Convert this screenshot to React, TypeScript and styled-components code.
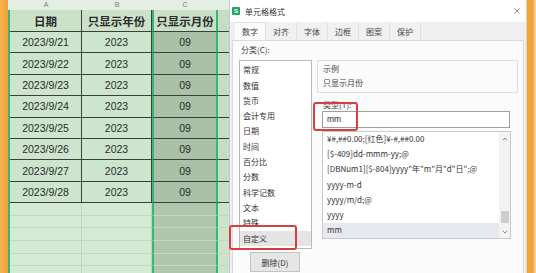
import React from "react";
import styled, { createGlobalStyle } from "styled-components";
import { X, ChevronUp, ChevronDown } from "lucide-react";

const CJK = `"Noto Sans CJK SC", "Noto Sans", sans-serif`;

const GlobalStyle = createGlobalStyle`
  html, body {
    margin: 0;
    padding: 0;
  }
  body {
    width: 536px;
    height: 273px;
    overflow: hidden;
    background: #f3a53c;
    font-family: ${CJK};
  }
`;

const Page = styled.div`
  display: flex;
  width: 536px;
  height: 273px;
  overflow: hidden;
  background: #f3a53c;
`;

const LeftEdge = styled.div`
  width: 8px;
  flex: none;
  background: linear-gradient(90deg, #f7b552, #f0a236);
`;

const RightEdge = styled.div`
  flex: 1;
  background: linear-gradient(90deg, #f2a33a 0, #f2a33a 6px, #f8cf92 8px, #fbe3bd 100%);
`;

/* ---------- spreadsheet ---------- */

const Sheet = styled.div`
  width: 221px;
  flex: none;
  display: flex;
  flex-direction: column;
  background: #d3e9d2;
`;

const COLS = "72px 70px 66px 11px";

const ColHead = styled.div`
  display: grid;
  grid-template-columns: 2px ${COLS};
  height: 10px;
  background: #e3efe1;
  font-family: "Liberation Sans", sans-serif;
  font-size: 7px;
  line-height: 10px;
  color: #7a7a7a;
  text-align: center;
`;

const Table = styled.div`
  display: grid;
  grid-template-columns: ${COLS};
  border-left: 2px solid #3db374;
`;

const Cell = styled.div<{ $sel?: boolean; $tail?: boolean; $head?: boolean; $h: number }>`
  box-sizing: border-box;
  height: ${(p) => p.$h}px;
  display: flex;
  align-items: center;
  justify-content: center;
  border-bottom: 1px solid #3a3f3a;
  border-right: ${(p) => (p.$sel || p.$tail ? "0" : "1px solid #3a3f3a")};
  border-left: ${(p) => (p.$sel ? "2px solid #3db374" : "0")};
  ${(p) => (p.$sel ? "border-right: 2px solid #3db374;" : "")}
  background: ${(p) =>
    p.$tail ? "#c6ddc5" : p.$sel ? (p.$head ? "#c9e0c7" : "#a9c1a7") : p.$head ? "#cbe2c9" : "#cde5cc"};
  font-family: ${(p) => (p.$head ? CJK : `"Liberation Sans", sans-serif`)};
  font-size: ${(p) => (p.$head ? "11.5px" : "10.5px")};
  font-weight: ${(p) => (p.$head ? 700 : 400)};
  color: #2b2b2b;
  white-space: nowrap;
`;

const FillCell = styled.div<{ $sel?: boolean; $tail?: boolean }>`
  box-sizing: border-box;
  height: 12.6px;
  border-bottom: 1px solid #c2d9c1;
  border-right: ${(p) => (p.$sel || p.$tail ? "0" : "1px solid #bfd3c6")};
  ${(p) => (p.$sel ? "border-left: 2px solid #3db374; border-right: 2px solid #3db374;" : "")}
  background: ${(p) => (p.$tail ? "#cde3cc" : p.$sel ? "#aec6ac" : "#d4ead3")};
`;

/* ---------- dialog ---------- */

const Dialog = styled.div`
  width: 298px;
  flex: none;
  box-sizing: border-box;
  display: flex;
  flex-direction: column;
  background: #ffffff;
  border-left: 1px solid #c9c9c9;
  border-right: 1px solid #d6d6d6;
  font-family: ${CJK};
  color: #333;
`;

const TitleBar = styled.div`
  height: 22px;
  flex: none;
  display: flex;
  align-items: center;
  padding: 0 4px 0 2px;
  font-size: 8px;
`;

const Logo = styled.div`
  width: 8px;
  height: 8px;
  border-radius: 1px;
  background: #29a567;
  color: #fff;
  font-family: "Liberation Sans", sans-serif;
  font-weight: 700;
  font-size: 6px;
  line-height: 8px;
  text-align: center;
`;

const Title = styled.div`
  margin-left: 5px;
  color: #333;
`;

const Close = styled.div`
  margin-left: auto;
  display: flex;
  color: #555;
`;

const Body = styled.div`
  flex: 1;
  display: flex;
  flex-direction: column;
  background: #efefef;
  padding: 0 2px 0 2px;
`;

const Tabs = styled.div`
  display: flex;
  height: 18px;
  margin-left: 3px;
`;

const Tab = styled.div<{ $active?: boolean }>`
  width: 31px;
  box-sizing: border-box;
  display: flex;
  align-items: center;
  justify-content: center;
  font-size: 8px;
  color: #444;
  background: ${(p) => (p.$active ? "#fbfbfb" : "#f1f1f1")};
  border-right: 1px solid #e0e0e0;
  border-top: 1px solid ${(p) => (p.$active ? "#e0e0e0" : "transparent")};
`;

const Panel = styled.div`
  position: relative;
  flex: 1;
  background: #fbfbfb;
  border: 1px solid #dadada;
  border-bottom: 0;
  padding: 2px 0 0 6px;
`;

const GroupLabel = styled.div`
  height: 17px;
  padding-left: 2px;
  font-size: 8px;
  line-height: 14px;
  color: #444;
`;

const Columns = styled.div`
  display: flex;
  gap: 5px;
`;

const LeftCol = styled.div`
  width: 73px;
  display: flex;
  flex-direction: column;
`;

const CatList = styled.div`
  height: 189px;
  box-sizing: border-box;
  border: 1px solid #b9b9b9;
  background: #fff;
  padding-top: 1.3px;
`;

const CatItem = styled.div<{ $sel?: boolean }>`
  height: 15.3px;
  line-height: 15.3px;
  padding-left: 3px;
  font-size: 8px;
  color: #333;
  background: ${(p) => (p.$sel ? "#e4e4e4" : "transparent")};
`;

const Button = styled.div`
  margin: 3px 0 0 11px;
  width: 50px;
  height: 20px;
  box-sizing: border-box;
  display: flex;
  align-items: center;
  justify-content: center;
  background: #e6e6e6;
  border: 1px solid #c4c4c4;
  font-size: 8px;
  color: #333;
`;

const RightCol = styled.div`
  width: 201px;
  display: flex;
  flex-direction: column;
`;

const Sample = styled.div`
  height: 33px;
  box-sizing: border-box;
  border: 1px solid #dedede;
  padding: 1px 0 0 5px;
  font-size: 8px;
  line-height: 14px;
  color: #444;
`;

const TypeLabel = styled.div`
  margin-top: 5px;
  height: 13px;
  padding-left: 6px;
  font-size: 8px;
  line-height: 13px;
  color: #444;
`;

const Input = styled.div`
  margin-left: 5px;
  width: 188px;
  height: 17px;
  box-sizing: border-box;
  border: 1px solid #9e9e9e;
  background: #fff;
  padding-left: 4px;
  font-family: "Liberation Sans", sans-serif;
  font-size: 8.5px;
  line-height: 15px;
  color: #222;
`;

const FormatList = styled.div`
  position: relative;
  margin: 3px 0 0 5px;
  width: 189px;
  height: 108px;
  box-sizing: border-box;
  border: 1px solid #c8c8c8;
  background: #fff;
  display: flex;
`;

const FormatItems = styled.div`
  flex: 1;
`;

const FormatItem = styled.div<{ $sel?: boolean }>`
  height: 15.2px;
  line-height: 13px;
  padding-left: 4px;
  font-size: 8px;
  color: #333;
  white-space: nowrap;
  background: ${(p) => (p.$sel ? "#e6e9ef" : "transparent")};
`;

const Scrollbar = styled.div`
  width: 11px;
  display: flex;
  flex-direction: column;
  align-items: center;
  justify-content: space-between;
  background: #f3f3f3;
  color: #555;
  padding: 3px 0 2px;
  box-sizing: border-box;
`;

const Thumb = styled.div`
  width: 8px;
  height: 12px;
  margin-top: auto;
  margin-bottom: 5px;
  background: #cdcdcd;
`;

const Highlight = styled.div<{ $x: number; $y: number; $w: number; $h: number }>`
  position: absolute;
  left: ${(p) => p.$x}px;
  top: ${(p) => p.$y}px;
  width: ${(p) => p.$w}px;
  height: ${(p) => p.$h}px;
  box-sizing: border-box;
  border: 2px solid #dc3b3f;
  border-radius: 3px;
  pointer-events: none;
`;

const dates = ["21", "22", "23", "24", "25", "26", "27", "28"];
const tabs = ["数字", "对齐", "字体", "边框", "图案", "保护"];
const categories = ["常规", "数值", "货币", "会计专用", "日期", "时间", "百分比", "分数", "科学记数", "文本", "特殊", "自定义"];
const formats = [
  "¥#,##0.00;[红色]¥-#,##0.00",
  "[$-409]dd-mmm-yy;@",
  '[DBNum1][$-804]yyyy"年"m"月"d"日";@',
  "yyyy-m-d",
  "yyyy/m/d;@",
  "yyyy",
  "mm",
];

export default function App() {
  return (
    <>
      <GlobalStyle />
      <Page>
        <LeftEdge />
        <Sheet>
          <ColHead>
            <span />
            <span>A</span>
            <span>B</span>
            <span>C</span>
            <span />
          </ColHead>
          <Table>
            <Cell $head $h={22}>日期</Cell>
            <Cell $head $h={22}>只显示年份</Cell>
            <Cell $head $sel $h={22}>只显示月份</Cell>
            <Cell $head $tail $h={22} />
            {dates.map((d) => (
              <React.Fragment key={d}>
                <Cell $h={21.4}>2023/9/{d}</Cell>
                <Cell $h={21.4}>2023</Cell>
                <Cell $sel $h={21.4}>09</Cell>
                <Cell $tail $h={21.4} />
              </React.Fragment>
            ))}
            {Array.from({ length: 6 }).map((_, i) => (
              <React.Fragment key={i}>
                <FillCell />
                <FillCell />
                <FillCell $sel />
                <FillCell $tail />
              </React.Fragment>
            ))}
          </Table>
        </Sheet>
        <Dialog>
          <TitleBar>
            <Logo>S</Logo>
            <Title>单元格格式</Title>
            <Close>
              <X size={10} strokeWidth={1.4} />
            </Close>
          </TitleBar>
          <Body>
            <Tabs>
              {tabs.map((t, i) => (
                <Tab key={t} $active={i === 0}>
                  {t}
                </Tab>
              ))}
            </Tabs>
            <Panel>
              <GroupLabel>分类(C):</GroupLabel>
              <Columns>
                <LeftCol>
                  <CatList>
                    {categories.map((c) => (
                      <CatItem key={c} $sel={c === "自定义"}>
                        {c}
                      </CatItem>
                    ))}
                  </CatList>
                  <Button>删除(D)</Button>
                </LeftCol>
                <RightCol>
                  <Sample>
                    <div>示例</div>
                    <div>只显示月份</div>
                  </Sample>
                  <TypeLabel>类型(T):</TypeLabel>
                  <Input>mm</Input>
                  <FormatList>
                    <FormatItems>
                      {formats.map((f) => (
                        <FormatItem key={f} $sel={f === "mm"}>
                          {f}
                        </FormatItem>
                      ))}
                    </FormatItems>
                    <Scrollbar>
                      <ChevronUp size={8} strokeWidth={2} />
                      <Thumb />
                      <ChevronDown size={8} strokeWidth={2} />
                    </Scrollbar>
                  </FormatList>
                </RightCol>
              </Columns>
              <Highlight $x={-4} $y={184} $w={68} $h={25} />
              <Highlight $x={80} $y={61} $w={45} $h={29} />
            </Panel>
          </Body>
        </Dialog>
        <RightEdge />
      </Page>
    </>
  );
}
